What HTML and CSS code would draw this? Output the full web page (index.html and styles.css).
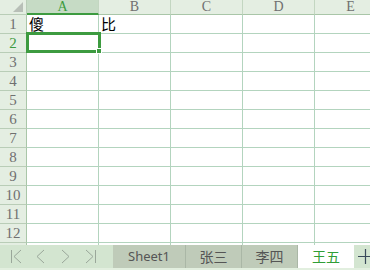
FILE: index.html
```html
<!DOCTYPE html>
<html>
<head>
  <title>Sheet</title>
  <link rel="stylesheet" href="styles.css">
</head>
<body>
  <div class="book">
    <div class="sheet">
      <!-- column headers -->
      <div class="grid">
        <div class="corner"><span class="tri"></span></div>
        <div class="colhead active">A</div>
        <div class="colhead">B</div>
        <div class="colhead">C</div>
        <div class="colhead">D</div>
        <div class="colhead">E</div>

        <div class="rowhead">1</div>
        <div class="cell">傻</div>
        <div class="cell">比</div>
        <div class="cell"></div>
        <div class="cell"></div>
        <div class="cell"></div>

        <div class="rowhead active">2</div>
        <div class="cell"></div><div class="cell"></div><div class="cell"></div><div class="cell"></div><div class="cell"></div>
        <div class="rowhead">3</div>
        <div class="cell"></div><div class="cell"></div><div class="cell"></div><div class="cell"></div><div class="cell"></div>
        <div class="rowhead">4</div>
        <div class="cell"></div><div class="cell"></div><div class="cell"></div><div class="cell"></div><div class="cell"></div>
        <div class="rowhead">5</div>
        <div class="cell"></div><div class="cell"></div><div class="cell"></div><div class="cell"></div><div class="cell"></div>
        <div class="rowhead">6</div>
        <div class="cell"></div><div class="cell"></div><div class="cell"></div><div class="cell"></div><div class="cell"></div>
        <div class="rowhead">7</div>
        <div class="cell"></div><div class="cell"></div><div class="cell"></div><div class="cell"></div><div class="cell"></div>
        <div class="rowhead">8</div>
        <div class="cell"></div><div class="cell"></div><div class="cell"></div><div class="cell"></div><div class="cell"></div>
        <div class="rowhead">9</div>
        <div class="cell"></div><div class="cell"></div><div class="cell"></div><div class="cell"></div><div class="cell"></div>
        <div class="rowhead">10</div>
        <div class="cell"></div><div class="cell"></div><div class="cell"></div><div class="cell"></div><div class="cell"></div>
        <div class="rowhead">11</div>
        <div class="cell"></div><div class="cell"></div><div class="cell"></div><div class="cell"></div><div class="cell"></div>
        <div class="rowhead">12</div>
        <div class="cell"></div><div class="cell"></div><div class="cell"></div><div class="cell"></div><div class="cell"></div>
        <div class="rowhead"></div>
        <div class="cell"></div><div class="cell"></div><div class="cell"></div><div class="cell"></div><div class="cell"></div>
      </div>
      <!-- selected cell A2 -->
      <div class="selection"><span class="handle"></span></div>
    </div>

    <div class="tabbar">
      <div class="nav">
        <svg width="100" height="23" viewBox="0 0 100 23">
          <g fill="none" stroke="#9aa79a" stroke-width="1">
            <path d="M11.5 5v13"/>
            <path d="M21 5l-7 6.5 7 6.5"/>
            <path d="M44 5l-7 6.5 7 6.5"/>
            <path d="M62 5l7 6.5-7 6.5"/>
            <path d="M86 5l7 6.5-7 6.5"/>
            <path d="M95.5 5v13"/>
          </g>
        </svg>
      </div>
      <div class="tabs">
        <div class="tab first">Sheet1</div>
        <div class="tab">张三</div>
        <div class="tab">李四</div>
        <div class="tab current">王五</div>
        <div class="add">
          <svg width="16" height="23" viewBox="0 0 16 23">
            <path d="M0 11.5h14M7.5 4v15" stroke="#3a4a5a" stroke-width="1.2" fill="none"/>
          </svg>
        </div>
      </div>
    </div>
    <div class="strip"></div>
  </div>
</body>
</html>
```

FILE: styles.css
```css
* { box-sizing: border-box; }
body {
  margin: 0;
  background: #ffffff;
  overflow: hidden;
  font-family: "Noto Sans CJK SC", "Noto Sans", sans-serif;
}
.book { width: 370px; height: 270px; display: flex; flex-direction: column; }
.sheet {
  position: relative;
  height: 245px;
  overflow: hidden;
}
.grid {
  display: grid;
  grid-template-columns: 27px repeat(5, 72px);
  grid-template-rows: 15px repeat(13, 19px);
  width: 387px;
}
.corner {
  position: relative;
  background: #e4eee2;
  border-right: 1px solid #b9cdb7;
  border-bottom: 1px solid #b9cdb7;
}
.tri {
  position: absolute;
  right: 3px;
  bottom: 2px;
  width: 0;
  height: 0;
  border-left: 10px solid transparent;
  border-bottom: 10px solid #b8bfb7;
}
.colhead {
  background: #e4eee2;
  border-right: 1px solid #c3d6c1;
  border-bottom: 1px solid #a9c6a8;
  color: #707070;
  font-family: "Liberation Serif", "DejaVu Serif", serif;
  font-size: 14px;
  line-height: 14px;
  text-align: center;
}
.colhead.active {
  background: #c6dbc5;
  color: #3d9b40;
  border-bottom: 2px solid #3d9b40;
  line-height: 13px;
}
.rowhead {
  background: #e4eee2;
  border-right: 1px solid #a9c6a8;
  border-bottom: 1px solid #b9cdb7;
  color: #707070;
  font-family: "Liberation Serif", "DejaVu Serif", serif;
  font-size: 15px;
  line-height: 19px;
  text-align: center;
}
.rowhead.active { color: #3d9b40; }
.cell {
  border-right: 1px solid #b3d4be;
  border-bottom: 1px solid #b3d4be;
  font-size: 15px;
  line-height: 18px;
  padding-left: 2px;
  color: #000;
}
.selection {
  position: absolute;
  left: 26px;
  top: 32px;
  width: 75px;
  height: 21px;
  border: 3px solid #3d9b40;
}
.handle {
  position: absolute;
  right: -4px;
  bottom: -4px;
  width: 6px;
  height: 6px;
  background: #3d9b40;
  border: 1px solid #ffffff;
}
.tabbar {
  height: 23px;
  display: flex;
  background: #d3e5d0;
}
.nav { width: 113px; flex: none; }
.nav svg { display: block; }
.tabs { display: flex; }
.tab {
  height: 23px;
  width: 56px;
  background: #bfcbb9;
  border-right: 1px solid #aab7a6;
  color: #555555;
  font-size: 14px;
  line-height: 23px;
  text-align: center;
}
.tab.first {
  width: 73px;
  font-family: "Noto Sans", sans-serif;
  font-size: 13px;
}
.tab.current {
  background: #ffffff;
  color: #2f9e36;
  border-right: none;
}
.add {
  width: 16px;
  padding-left: 4px;
}
.add svg { display: block; }
.strip { height: 2px; background: #e2efdf; }
```
